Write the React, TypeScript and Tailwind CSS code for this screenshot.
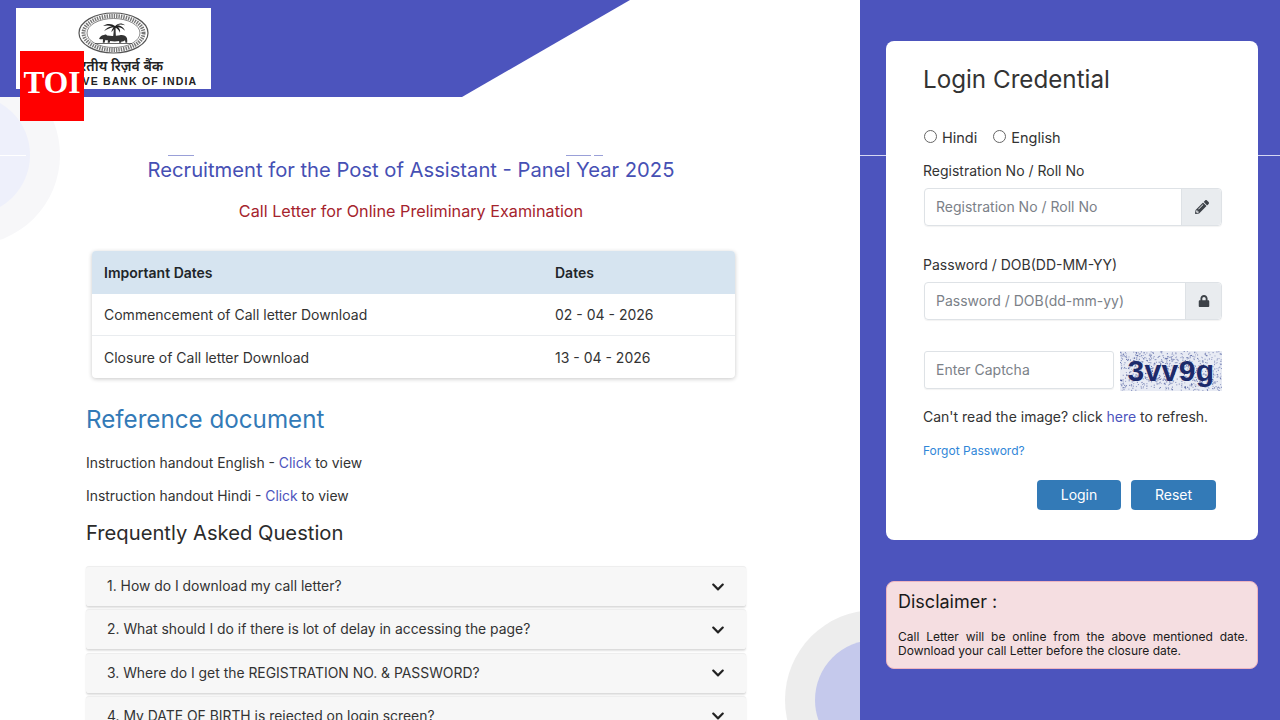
import React from "react";
import { FaChevronDown, FaLock, FaPencilAlt } from "react-icons/fa";

const faqs = [
  "1. How do I download my call letter?",
  "2. What should I do if there is lot of delay in accessing the page?",
  "3. Where do I get the REGISTRATION NO. & PASSWORD?",
  "4. My DATE OF BIRTH is rejected on login screen?",
];

// speckle for the captcha picture, seeded so it's the same every render
let seed = 7;
const rand = () => {
  seed = (seed * 1103515245 + 12345) % 2147483648;
  return seed / 2147483648;
};
const noise = Array.from({ length: 700 }, () => ({
  x: rand() * 101,
  y: rand() * 39,
  o: 0.35 + rand() * 0.5,
}));

// drawn at the squashed proportions of the picture
const Seal = () => (
  <svg viewBox="0 0 71 42" className="h-[42px] w-[71px]">
    <ellipse cx="35.5" cy="21" rx="34.5" ry="20" fill="#fff" stroke="#555" strokeWidth="1.2" />
    <ellipse cx="35.5" cy="21" rx="30" ry="17" fill="none" stroke="#777" strokeWidth="4" strokeDasharray="1.4 1" />
    <ellipse cx="35.5" cy="21" rx="26.5" ry="14.5" fill="#fff" stroke="#555" strokeWidth="0.7" />
    <path d="M35 26c.6-4 .8-8 1-12h1.6c0 4 0 8 .4 12z" fill="#333" />
    <path d="M37 14c-3-2.5-8-3-12 0 3-.7 6-.7 9 .3-3 .5-6 2-8 5 3-2 6-3.500 9.500-4-1 1.500-2 3-2 5 1.500-2 2.500-3.500 4-4.500 2 1 3.500 2.500 4.500 5 .5-2.500-.5-4.500-2-5.500 3 .2 5 1.500 7 3.500-1-3-4-5.500-8-5.500 2-1 5-1 8 0-3-2.500-7-2.500-10 1z" fill="#222" />
    <path d="M21 27c1-2.500 3-4 5-4 1-1 2.500-.5 3 .5 4 .7 9 .5 13-.3 3-.5 6 .5 7 3 .4 1.500.2 3 .2 4.500h-1.700l-.5-2.500c-1 1-2.500 1.300-3.500 1.200l-.5 1.300h-2l.2-1.700c-3 .5-6 .5-9 0l-.5 1.700h-2l.2-2.500c-1 .2-1.800 0-2.400-.5l-1 3h-1.700l.2-3.500c-1.500.2-3.300.2-4-.700z" fill="#333" />
    <path d="M17 31.500h37" stroke="#444" strokeWidth="0.8" />
  </svg>
);

const Captcha = () => (
  <div className="relative flex h-10 w-[102px] items-center justify-center overflow-hidden bg-[#e8ebf4]">
    <svg viewBox="0 0 102 40" className="absolute inset-0 h-full w-full">
      {noise.map((n, i) => (
        <rect key={i} x={n.x} y={n.y} width="1" height="1" fill="#3f4f96" opacity={n.o} />
      ))}
    </svg>
    <span className="relative font-['Liberation_Sans'] text-[30px] leading-none font-bold tracking-[0.4px] text-[#1c2a6b]">
      3vv9g
    </span>
  </div>
);

const InputGroup = ({ placeholder, icon, addon }: { placeholder: string; icon: React.ReactNode; addon: string }) => (
  <div className="flex h-[38px] w-[298px] rounded border border-[#dee2e6] shadow-[0_1px_1px_rgba(0,0,0,0.05)]">
    <div className="flex flex-1 items-center pb-px pl-[11px] text-[14px] text-[#7b8188]">{placeholder}</div>
    <div className={`flex ${addon} items-center justify-center rounded-r border-l border-[#dee2e6] bg-[#e9ecef] text-[#3d4248]`}>
      {icon}
    </div>
  </div>
);

export default function App() {
  return (
    <div className="relative flex h-[720px] w-[1280px] overflow-hidden bg-white font-['Inter',sans-serif] text-[#333]">
      {/* background circles */}
      <div className="absolute top-[65px] left-[-120px] flex h-[180px] w-[180px] items-center justify-center rounded-full bg-[#f7f7f9]">
        <div className="h-[120px] w-[120px] rounded-full bg-[#eef0fb]" />
      </div>
      <div className="absolute top-[610px] left-[785px] flex h-[180px] w-[180px] items-center justify-center rounded-full bg-[#ededed]">
        <div className="h-[120px] w-[120px] rounded-full bg-[#c5c9ec]" />
      </div>

      {/* header banner */}
      <svg viewBox="0 0 630 97" className="absolute top-0 left-0 h-[97px] w-[630px]">
        <polygon points="0,0 630,0 462,97 0,97" fill="#4c54bd" />
      </svg>
      <div className="absolute top-2 left-4 flex h-[81px] w-[195px] flex-col items-center bg-white pt-[4px]">
        <Seal />
        <div className="mt-[4px] ml-[2px] text-[14px] leading-[16px] font-semibold text-[#222] font-['Noto_Sans',sans-serif]">
          भारतीय रिज़र्व बैंक
        </div>
        <div className="mt-px ml-[11px] whitespace-nowrap font-['Liberation_Sans'] text-[10.5px] leading-[12px] font-bold tracking-[1.15px] text-[#222]">
          RESERVE BANK OF INDIA
        </div>
      </div>
      <div className="absolute top-[51px] left-5 flex h-[70px] w-16 items-center justify-center bg-[#ff0000] pb-[7px] font-['Liberation_Serif'] text-[31.5px] font-bold text-white">
        TOI
      </div>

      {/* faint rule across the page */}
      <div className="absolute top-[155px] left-0 h-px w-[26px] bg-white" />
      <div className="absolute top-[155px] left-[168px] h-px w-[26px] bg-[#9aa0d8]" />
      <div className="absolute top-[155px] left-[566px] h-px w-[25px] bg-[#9aa0d8]" />
      <div className="absolute top-[155px] left-[594px] h-px w-[9px] bg-[#9aa0d8]" />

      {/* left column */}
      <main className="relative flex w-[860px] flex-col pt-[156px] pl-[86px]">
        <div className="w-[650px] shrink-0 text-center">
          <h1 className="text-[20.2px] leading-[28px] font-normal text-[#4650b4]">
            Recruitment for the Post of Assistant - Panel Year 2025
          </h1>
          <h2 className="mt-[17px] text-[16.2px] leading-[20px] text-[#a5232d]">
            Call Letter for Online Preliminary Examination
          </h2>
        </div>

        <div className="mt-[30px] ml-[6px] w-[643px] shrink-0 overflow-hidden rounded bg-white text-[14px] shadow-[0_1px_4px_rgba(0,0,0,0.22)]">
          <div className="flex h-[43px] items-center bg-[#d6e4f0] pb-px font-semibold text-[#212529]">
            <div className="w-[463px] pl-3">Important Dates</div>
            <div>Dates</div>
          </div>
          <div className="flex h-[42px] items-center border-b border-[#e9ecef]">
            <div className="w-[463px] pl-3">Commencement of Call letter Download</div>
            <div>02 - 04 - 2026</div>
          </div>
          <div className="flex h-[42px] items-center">
            <div className="w-[463px] pl-3">Closure of Call letter Download</div>
            <div>13 - 04 - 2026</div>
          </div>
        </div>

        <h2 className="mt-[26px] text-[24.2px] leading-[32px] font-normal text-[#337ab7]">Reference document</h2>
        <p className="mt-[17px] text-[13.9px] leading-[20px]">
          Instruction handout English - <span className="text-[#4c54bd]">Click</span> to view
        </p>
        <p className="mt-[13px] text-[13.9px] leading-[20px]">
          Instruction handout Hindi - <span className="text-[#4c54bd]">Click</span> to view
        </p>
        <h3 className="mt-[13px] text-[20.2px] leading-[28px] font-normal text-[#2b2b2b]">Frequently Asked Question</h3>

        <div className="mt-[19px] flex w-[660px] shrink-0 flex-col gap-[2.3px]">
          {faqs.map((q) => (
            <div
              key={q}
              className="flex h-[41px] shrink-0 items-center justify-between rounded-[3px] border-t border-b border-t-[#eeeeee] border-b-[#dcdcdc] bg-[#f7f7f7] pr-[21px] pl-[21px] text-[13.9px] shadow-[0_1px_2px_rgba(0,0,0,0.12)]"
            >
              <span>{q}</span>
              <FaChevronDown className="text-[14px] text-[#222]" />
            </div>
          ))}
        </div>
      </main>

      {/* right column */}
      <aside className="relative flex w-[420px] flex-col bg-[#4c54bd] pt-[41px] pl-[26px]">
        <div className="absolute top-[155px] left-0 h-px w-full bg-[#d5d7f2]" />

        <div className="relative h-[499px] w-[372px] rounded-lg bg-white pt-[23px] pl-[38px] text-[14px]">
          <h2 className="-ml-px text-[24.2px] leading-[32px] font-normal text-[#333]">Login Credential</h2>

          <div className="mt-[32px] flex h-5 items-center text-[14.5px]">
            <span className="mt-[-3px] h-[13px] w-[13px] rounded-full border border-[#666]" />
            <span className="ml-[5px]">Hindi</span>
            <span className="mt-[-3px] ml-4 h-[13px] w-[13px] rounded-full border border-[#666]" />
            <span className="ml-[5px]">English</span>
          </div>

          <label className="mt-[13px] -ml-px block leading-5">Registration No / Roll No</label>
          <div className="mt-[7px]">
            <InputGroup placeholder="Registration No / Roll No" icon={<FaPencilAlt className="text-[14px]" />} addon="w-[40px]" />
          </div>

          <label className="mt-[29px] -ml-px block leading-5">Password / DOB(DD-MM-YY)</label>
          <div className="mt-[7px]">
            <InputGroup placeholder="Password / DOB(dd-mm-yy)" icon={<FaLock className="text-[12px]" />} addon="w-[36px]" />
          </div>

          <div className="mt-[31px] flex gap-[6px]">
            <div className="flex h-[38px] w-[190px] items-center rounded-[3px] border border-[#dee2e6] pb-px pl-[11px] text-[#7b8188] shadow-[0_1px_1px_rgba(0,0,0,0.05)]">
              Enter Captcha
            </div>
            <Captcha />
          </div>

          <p className="mt-[16px] -ml-px leading-5">
            Can't read the image? click <span className="text-[#4c54bd]">here</span> to refresh.
          </p>
          <p className="mt-[16px] -ml-px text-[12px] leading-[16px] text-[#2f86d8]">Forgot Password?</p>

          <div className="mt-[21px] ml-[113px] flex gap-[10px]">
            <button className="h-[30px] w-[84px] rounded bg-[#337ab7] pb-px text-[14px] text-white">Login</button>
            <button className="h-[30px] w-[85px] rounded bg-[#337ab7] pb-px text-[14px] text-white">Reset</button>
          </div>
        </div>

        <div className="mt-[41px] h-[88px] w-[372px] rounded-lg border border-[#eeb5c0] bg-[#f5dee1] pt-[8px] pr-[9px] pl-[11px] text-[#1a1a1a]">
          <h3 className="text-[18px] leading-6 font-normal">Disclaimer :</h3>
          <p className="mt-[15.500px] text-justify text-[12px] leading-[14px]">
            Call Letter will be online from the above mentioned date. Download your call Letter before the closure date.
          </p>
        </div>
      </aside>
    </div>
  );
}
